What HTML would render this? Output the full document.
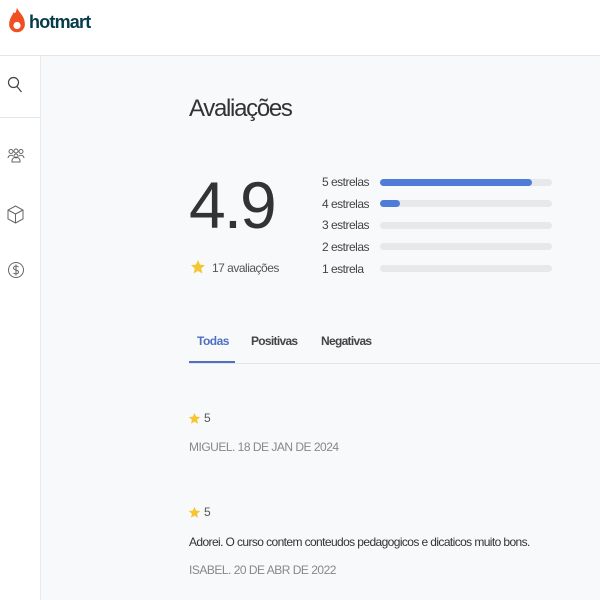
<!DOCTYPE html>
<html><head><meta charset="utf-8"><style>
body{margin:0;width:600px;height:600px;overflow:hidden;font-family:"Liberation Sans",sans-serif;background:#f7f9fa;position:relative;color:#333}
.hdr{position:absolute;left:0;top:0;width:600px;height:55px;background:#fff;border-bottom:1px solid #e4e6e8}
.side{position:absolute;left:0;top:56px;width:40px;height:544px;background:#fff;border-right:1px solid #e8eaec}
.t{position:absolute;white-space:nowrap;letter-spacing:-0.5px}
.bar{position:absolute;left:380px;width:172px;height:7px;border-radius:4px;background:#e6e8ea}
.bar i{display:block;height:7px;border-radius:4px;background:#4f7bd9}
.lbl{position:absolute;left:322px;font-size:12px;color:#444;letter-spacing:-0.5px}
</style></head><body>
<div class="hdr">
<svg style="position:absolute;left:8px;top:5px" width="18" height="32" viewBox="0 0 16 28"><path d="M8 2 C9 6 15 9 15 17 A7 7 0 0 1 1 17 C1 12 4 9 5 6 C6 8 7 7 8 2Z" fill="#f04e23"/><circle cx="8" cy="18" r="3.2" fill="#fff"/></svg>
<div class="t" style="left:29px;top:12px;font-size:18px;font-weight:bold;color:#053b4a;letter-spacing:-0.8px">hotmart</div>
</div>
<div class="side">
<svg style="position:absolute;left:7px;top:20px" width="16" height="18" viewBox="0 0 16 18" fill="none" stroke="#444" stroke-width="1.2"><circle cx="6.5" cy="6.5" r="5"/><path d="M10 10.5 L14.5 16"/></svg>
<div style="position:absolute;left:0;top:61px;width:40px;height:1px;background:#e4e6e8"></div>
<svg style="position:absolute;left:7px;top:92px" width="18" height="16" viewBox="0 0 18 16" fill="none" stroke="#666" stroke-width="1"><circle cx="4" cy="3.5" r="2"/><circle cx="9" cy="3" r="2"/><circle cx="14" cy="3.5" r="2"/><path d="M1 10 a3 3 0 0 1 5-2 M17 10 a3 3 0 0 0-5-2 M5 13 a4 4 0 0 1 8 0 v1 h-8z"/><circle cx="9" cy="8" r="2"/></svg>
<svg style="position:absolute;left:7px;top:149px" width="17" height="19" viewBox="0 0 17 19" fill="none" stroke="#666" stroke-width="1"><path d="M8.5 1 L16 5 V14 L8.5 18 L1 14 V5Z M1 5 L8.5 9 L16 5 M8.5 9 V18"/></svg>
<svg style="position:absolute;left:7px;top:205px" width="18" height="18" viewBox="0 0 18 18" fill="none" stroke="#666" stroke-width="1"><circle cx="9" cy="9" r="7.5"/><path d="M11.5 6 C10 4.5 6.5 5 6.5 7 C6.5 9.5 11.5 8.5 11.5 11 C11.5 13 8 13.5 6.5 12 M9 3.5 V14.5"/></svg>
</div>
<div class="t" style="left:189px;top:95px;font-size:24px;color:#333;letter-spacing:-1.3px">Avaliações</div>
<div class="t" style="left:189px;top:167px;font-size:66px;color:#333;font-weight:300;letter-spacing:-2px">4.9</div>
<svg style="position:absolute;left:190px;top:259px" width="16" height="16" viewBox="0 0 24 24"><path d="M12 1.5 L15 8.5 L22.5 9.2 L16.8 14.2 L18.5 21.8 L12 17.8 L5.5 21.8 L7.2 14.2 L1.5 9.2 L9 8.5Z" fill="#f5c533"/></svg>
<div class="t" style="left:212px;top:261px;font-size:12px;color:#555">17 avaliações</div>
<div class="lbl" style="top:175px">5 estrelas</div><div class="bar" style="top:179px"><i style="width:152px"></i></div>
<div class="lbl" style="top:197px">4 estrelas</div><div class="bar" style="top:200px"><i style="width:20px"></i></div>
<div class="lbl" style="top:218px">3 estrelas</div><div class="bar" style="top:222px"></div>
<div class="lbl" style="top:240px">2 estrelas</div><div class="bar" style="top:243px"></div>
<div class="lbl" style="top:262px">1 estrela</div><div class="bar" style="top:265px"></div>
<div class="t" style="left:197px;top:334px;font-size:12px;color:#4f6fc4;font-weight:bold">Todas</div>
<div class="t" style="left:251px;top:334px;font-size:12px;color:#444;font-weight:bold;letter-spacing:-0.7px">Positivas</div>
<div class="t" style="left:321px;top:334px;font-size:12px;color:#444;font-weight:bold;letter-spacing:-0.7px">Negativas</div>
<div style="position:absolute;left:189px;top:363px;width:411px;height:1px;background:#e2e4e6"></div>
<div style="position:absolute;left:189px;top:361px;width:46px;height:2px;background:#4f6fc4"></div>
<svg style="position:absolute;left:188px;top:412px" width="13" height="13" viewBox="0 0 24 24"><path d="M12 1.5 L15 8.5 L22.5 9.2 L16.8 14.2 L18.5 21.8 L12 17.8 L5.5 21.8 L7.2 14.2 L1.5 9.2 L9 8.5Z" fill="#f5c533"/></svg>
<div class="t" style="left:204px;top:411px;font-size:12px;color:#555">5</div>
<div class="t" style="left:189px;top:440px;font-size:12px;color:#888">MIGUEL. 18 DE JAN DE 2024</div>
<svg style="position:absolute;left:188px;top:506px" width="13" height="13" viewBox="0 0 24 24"><path d="M12 1.5 L15 8.5 L22.5 9.2 L16.8 14.2 L18.5 21.8 L12 17.8 L5.5 21.8 L7.2 14.2 L1.5 9.2 L9 8.5Z" fill="#f5c533"/></svg>
<div class="t" style="left:204px;top:505px;font-size:12px;color:#555">5</div>
<div class="t" style="left:189px;top:535px;font-size:12px;color:#333;letter-spacing:-0.6px">Adorei. O curso contem conteudos pedagogicos e dicaticos muito bons.</div>
<div class="t" style="left:189px;top:563px;font-size:12px;color:#888">ISABEL. 20 DE ABR DE 2022</div>
</body></html>
